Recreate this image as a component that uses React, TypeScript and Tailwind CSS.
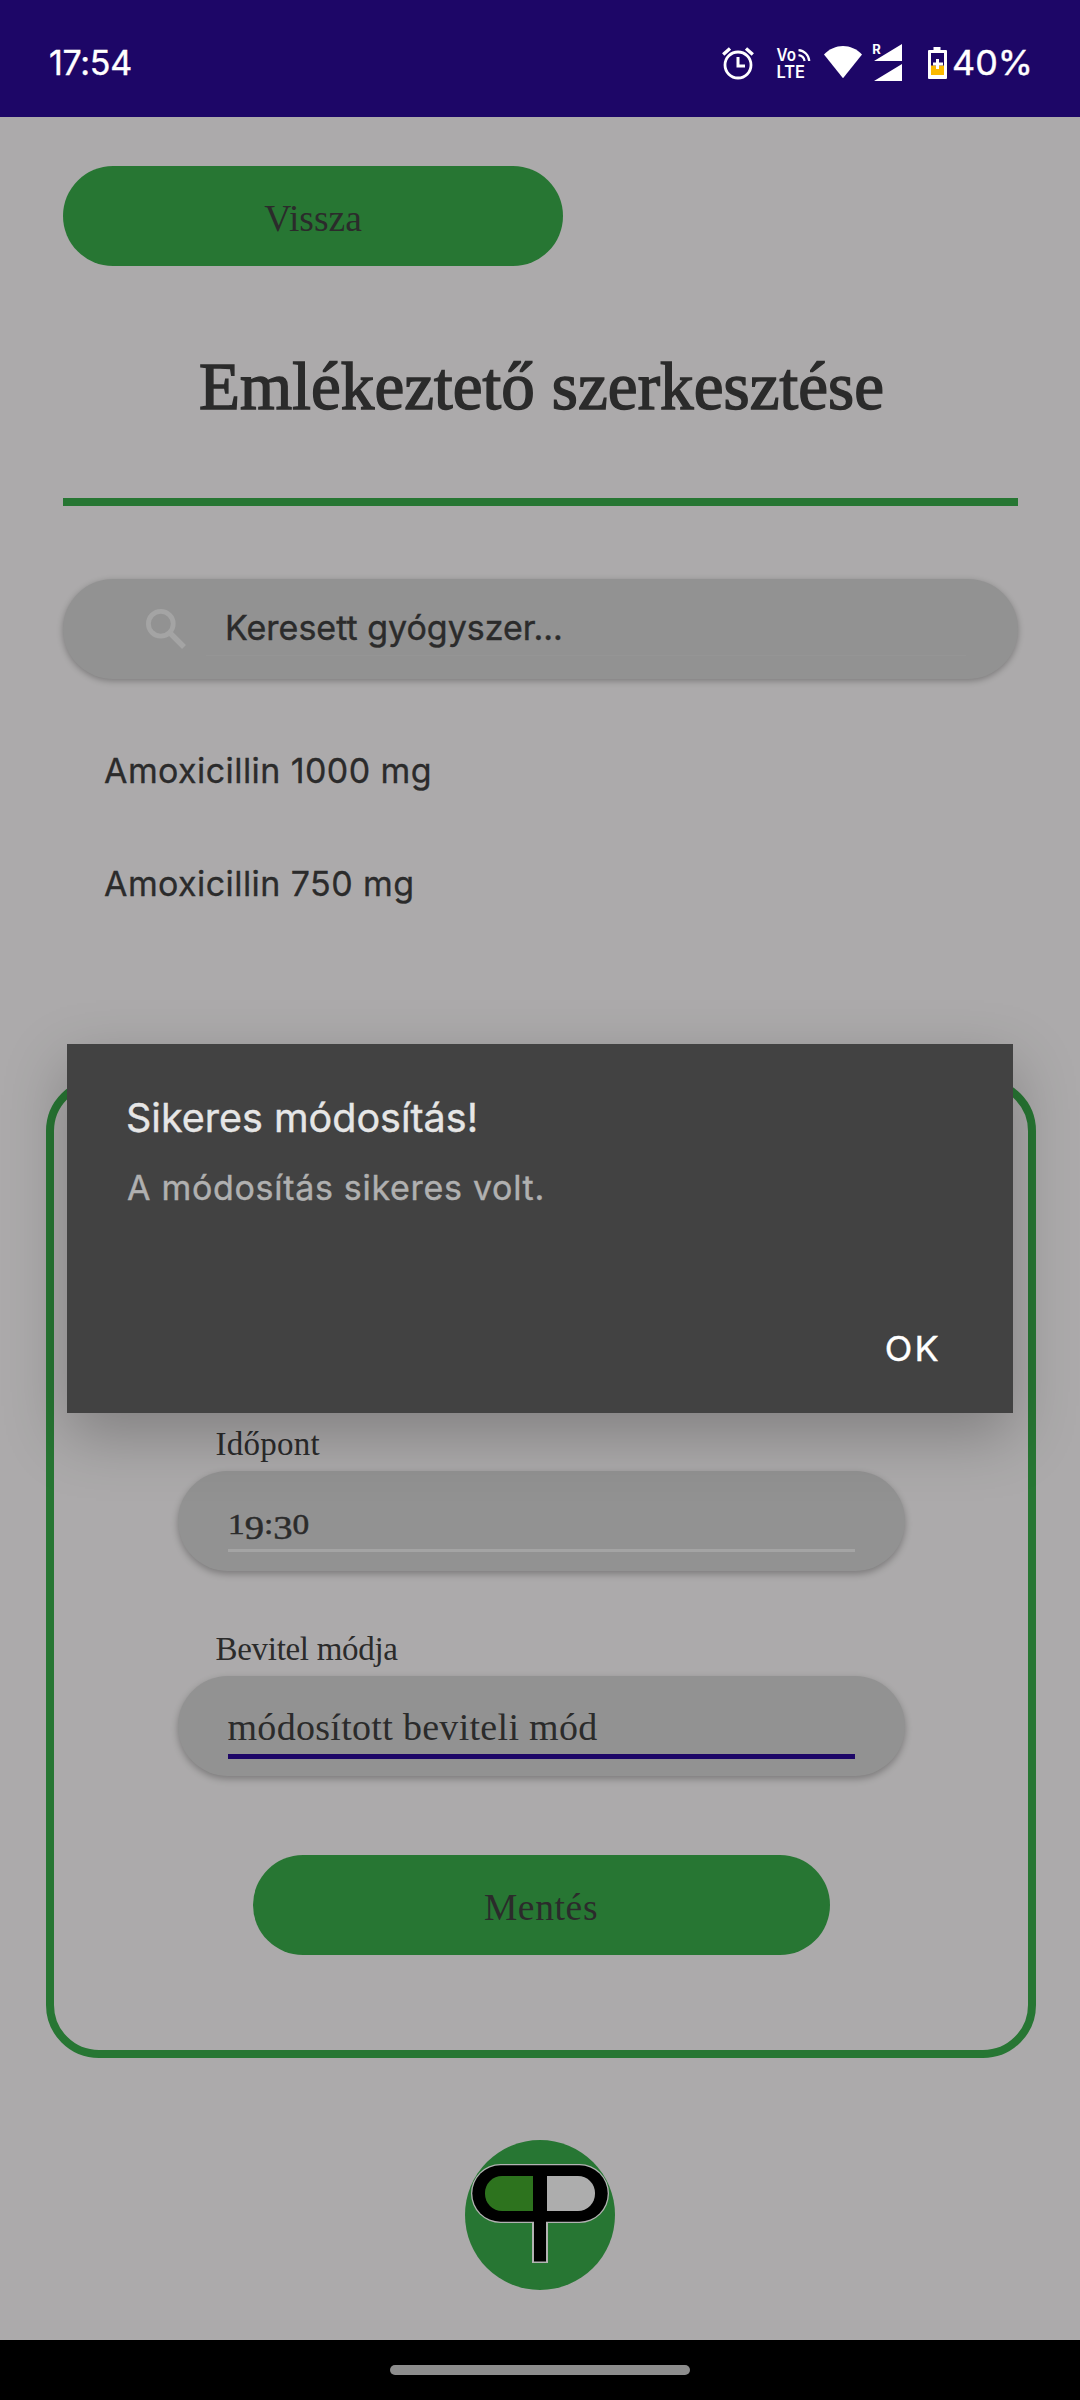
import React from "react";

function AlarmIcon() {
  return (
    <svg className="w-9 h-10" viewBox="0 0 36 40" fill="none" stroke="#fff">
      <circle cx="18" cy="22" r="13" strokeWidth="2.8" />
      <path d="M18 14v9h7" strokeWidth="3" />
      <path d="M3.2 11.4 10 5.4M32.8 11.4 26 5.4" strokeWidth="3.4" />
    </svg>
  );
}

function VolteIcon() {
  return (
    <svg className="ml-5 w-9 h-10" viewBox="0 0 36 40" fill="none" stroke="#fff">
      <g fill="#fff" stroke="none" fontFamily="Inter, sans-serif" fontWeight="600" fontSize="17">
        <text x="0.5" y="17.5" textLength="19.5" lengthAdjust="spacingAndGlyphs">Vo</text>
        <text x="0.5" y="34.5" textLength="28.5" lengthAdjust="spacingAndGlyphs">LTE</text>
      </g>
      <path d="M22.5 7.2A11.5 11.5 0 0 1 33.2 18M22.5 12.2A7 7 0 0 1 28.6 18" strokeWidth="2.2" />
    </svg>
  );
}

function WifiIcon() {
  return (
    <svg className="ml-[11px] w-10 h-10" viewBox="0 0 40 40" fill="#fff">
      <path d="M20 35.3 1 11.6C6.5 6 13 3.1 20 3.1S33.5 6 39 11.6Z" />
    </svg>
  );
}

function SignalIcon() {
  return (
    <svg className="ml-[9px] w-8 h-10 overflow-visible" viewBox="0 0 32 40" fill="#fff">
      <path d="M2 18 30 1v17ZM2 38 30 21v17Z" />
      <path d="M0 0h11.5v9L2 15Z" fill="#1d0667" />
      <text x="0.2" y="11" fontFamily="Inter, sans-serif" fontWeight="700" fontSize="13">R</text>
    </svg>
  );
}

function BatteryIcon() {
  return (
    <svg className="ml-[22px] w-[22px] h-10" viewBox="0 0 22 40">
      <path d="M7.5 4h7v3H20a1 1 0 0 1 1 1v27a1 1 0 0 1-1 1H3a1 1 0 0 1-1-1V8a1 1 0 0 1 1-1h4.5Z" fill="#fff" />
      <path d="M5 10h13v13H5Z" fill="#1d0667" />
      <path d="M5 22.500h13V32H5Z" fill="#fbb900" />
      <path d="M10 16h3v3.500h4v3h-4V26h-3v-3.500H7v-3h3Z" fill="#fff" />
    </svg>
  );
}

function Logo() {
  return (
    <svg className="w-[150px] h-[150px]" viewBox="0 0 150 150">
      <circle cx="75" cy="75" r="75" fill="#277633" />
      <rect x="6" y="24" width="138" height="59" rx="29.5" fill="#b3b3b3" />
      <rect x="67" y="70" width="16" height="53" fill="#b3b3b3" />
      <rect x="7.3" y="25.3" width="135.4" height="56.4" rx="28.2" fill="#000" />
      <rect x="69" y="70" width="12" height="51.5" fill="#000" />
      <path d="M68 36v35H37a17 17 0 0 1-17-17v-1a17 17 0 0 1 17-17Z" fill="#2d731e" />
      <path d="M82 36v35h31a17 17 0 0 0 17-17v-1a17 17 0 0 0-17-17Z" fill="#adadad" />
    </svg>
  );
}

/* Time value set with old-style figures: 1 and 0 at x-height, 9 and 3 descending. */
function TimeValue() {
  return (
    <span className="inline-block origin-left scale-x-[1.17] text-[28.5px] [-webkit-text-stroke:0.5px_#2b2b2b]">
      1
      <span className="inline-block translate-y-[5px] text-[33px]">9</span>:
      <span className="inline-block translate-y-[5px] text-[33px]">3</span>0
    </span>
  );
}

function Field({ label, labelClass, focused, className, children }: {
  label: string;
  labelClass: string;
  focused?: boolean;
  className: string;
  children: React.ReactNode;
}) {
  return (
    <div className={className}>
      <div className={labelClass}>{label}</div>
      <div className="h-[100px] rounded-full bg-[#929292] px-[50px] pt-[31px] shadow-[0_3px_7px_rgba(0,0,0,0.28)]">
        <div
          className={
            focused
              ? "h-[52px] border-b-[5px] border-[#1d0667] text-[38px] leading-[40px] tracking-[0.3px]"
              : "h-[50px] border-b-[3px] border-[#a4a4a4] text-[38px] leading-[38px]"
          }
        >
          {children}
        </div>
      </div>
    </div>
  );
}

export default function App() {
  return (
    <div className="relative flex h-[2400px] w-[1080px] flex-col overflow-hidden whitespace-nowrap bg-[#acaaab] font-['Inter',sans-serif] text-[#2b2b2b]">
      <header className="flex h-[117px] shrink-0 bg-[#1d0667] pl-[49px] pt-[43px] text-[34px] leading-[40px] text-white">
        <span className="w-[671px] tracking-[-0.3px] [-webkit-text-stroke:0.4px_#fff]">17:54</span>
        <AlarmIcon />
        <VolteIcon />
        <WifiIcon />
        <SignalIcon />
        <BatteryIcon />
        <span className="ml-1 origin-left scale-x-[1.055] [-webkit-text-stroke:0.4px_#fff]">40%</span>
      </header>

      <main className="flex h-[2223px] shrink-0 flex-col font-['Liberation_Serif',serif]">
        <button className="ml-[63px] mt-[49px] h-[100px] w-[500px] shrink-0 rounded-full bg-[#277633] pt-[7px] text-[37.5px]">
          Vissza
        </button>
        <h1 className="mt-[75px] h-[157px] pl-[199px] text-[67px] leading-[90px] tracking-[0.1px] [-webkit-text-stroke:1.5px_#2b2b2b]">
          Emlékeztető szerkesztése
        </h1>
        <div className="ml-[63px] mr-[62px] h-2 shrink-0 bg-[#277633]" />

        <div className="ml-[63px] mr-[62px] mt-[73px] flex h-[100px] shrink-0 items-center rounded-full bg-[#929292] font-['Inter',sans-serif] shadow-[0_2px_6px_rgba(0,0,0,0.28)]">
          <svg className="ml-[83px] h-10 w-10 shrink-0" viewBox="0 0 40 40" fill="none" stroke="#a4a4a4">
            <circle cx="14.8" cy="14.8" r="12.4" strokeWidth="4.8" />
            <path d="m24 24 14 14" strokeWidth="5.5" />
          </svg>
          <div className="ml-5 mt-[1px] h-[53px] w-[760px] border-b border-[#959595] pl-[19px] pt-[2px] text-[34px] leading-[46px] [-webkit-text-stroke:0.4px_#2b2b2b]">
            Keresett gyógyszer...
          </div>
        </div>

        <ul className="mt-[35px] h-[364px] shrink-0 pl-[104px] font-['Inter',sans-serif] text-[34px] leading-[113px] tracking-[0.42px] [-webkit-text-stroke:0.3px_#2b2b2b]">
          <li>Amoxicillin 1000 mg</li>
          <li>Amoxicillin 750 mg</li>
        </ul>

        <section className="ml-[46px] flex h-[980px] w-[990px] shrink-0 flex-col items-center rounded-[53px] border-8 border-[#277633] pt-[332px]">
          <Field
            label="Időpont"
            labelClass="h-[53px] pl-[38px] text-[33px] leading-[52px] tracking-[0.25px]"
            className="w-[727px]"
          >
            <TimeValue />
          </Field>
          <Field
            label="Bevitel módja"
            labelClass="h-[53px] pl-[38px] text-[33px] leading-[52px] tracking-[-0.3px]"
            focused
            className="mt-[52px] w-[727px]"
          >
            módosított beviteli mód
          </Field>
          <button className="mt-[79px] h-[100px] w-[577px] rounded-full bg-[#277633] pt-[7px] text-[37.5px] tracking-[0.64px]">
            Mentés
          </button>
        </section>

        <div className="mt-[82px] flex justify-center">
          <Logo />
        </div>
      </main>

      <footer className="flex h-[60px] shrink-0 justify-center bg-black pt-[25px]">
        <div className="h-[10px] w-[300px] rounded-full bg-[#8d8d8d]" />
      </footer>

      <div
        role="alertdialog"
        className="absolute left-[67px] top-[1044px] flex h-[369px] w-[946px] flex-col bg-[#424242] pt-[49px] shadow-[0_22px_58px_rgba(0,0,0,0.25)]"
      >
        <h2 className="pl-[59px] text-[39.5px] leading-[50px] text-[#e6e6e6] [-webkit-text-stroke:0.4px_#e6e6e6]">
          Sikeres módosítás!
        </h2>
        <p className="mt-[20px] pl-[60px] text-[34px] leading-[50px] tracking-[0.7px] text-[#b0b0b0] [-webkit-text-stroke:0.4px_#b0b0b0]">
          A módosítás sikeres volt.
        </p>
        <button className="ml-auto mr-[72px] mt-[111px] origin-right scale-x-[1.06] text-[34px] leading-[50px] tracking-[2px] text-white [-webkit-text-stroke:0.4px_#fff]">
          OK
        </button>
      </div>
    </div>
  );
}
